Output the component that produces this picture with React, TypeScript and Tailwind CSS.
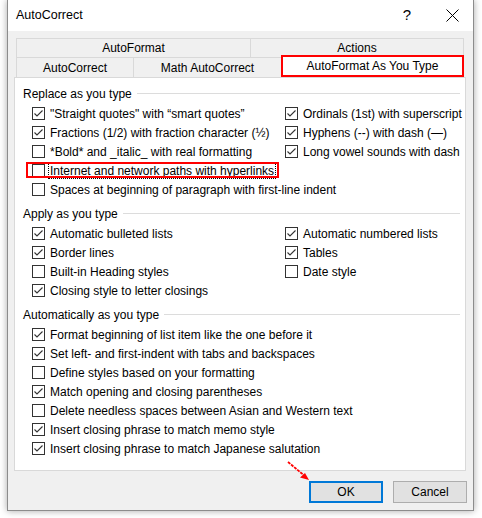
import React from "react";

type Item = { label: string; checked: boolean; focus?: boolean };

const replaceLeft: Item[] = [
  { label: "\"Straight quotes\" with \u201Csmart quotes\u201D", checked: true },
  { label: "Fractions (1/2) with fraction character (\u00BD)", checked: true },
  { label: "*Bold* and _italic_ with real formatting", checked: false },
  { label: "Internet and network paths with hyperlinks", checked: false, focus: true },
  { label: "Spaces at beginning of paragraph with first-line indent", checked: false },
];
const replaceRight: Item[] = [
  { label: "Ordinals (1st) with superscript", checked: true },
  { label: "Hyphens (--) with dash (\u2014)", checked: true },
  { label: "Long vowel sounds with dash", checked: true },
];
const applyLeft: Item[] = [
  { label: "Automatic bulleted lists", checked: true },
  { label: "Border lines", checked: true },
  { label: "Built-in Heading styles", checked: false },
  { label: "Closing style to letter closings", checked: true },
];
const applyRight: Item[] = [
  { label: "Automatic numbered lists", checked: true },
  { label: "Tables", checked: true },
  { label: "Date style", checked: false },
];
const autoItems: Item[] = [
  { label: "Format beginning of list item like the one before it", checked: true },
  { label: "Set left- and first-indent with tabs and backspaces", checked: true },
  { label: "Define styles based on your formatting", checked: false },
  { label: "Match opening and closing parentheses", checked: true },
  { label: "Delete needless spaces between Asian and Western text", checked: false },
  { label: "Insert closing phrase to match memo style", checked: true },
  { label: "Insert closing phrase to match Japanese salutation", checked: true },
];

function Box({ checked }: { checked: boolean }) {
  return (
    <span className="w-[13px] h-[13px] border border-[#333333] bg-white shrink-0 flex items-center justify-center">
      {checked && (
        <svg width="11" height="11" viewBox="0 0 11 11">
          <path d="M1.5 5.5 L4 8 L9.5 2.5" fill="none" stroke="#333333" strokeWidth="1.1" />
        </svg>
      )}
    </span>
  );
}

function Row({ item }: { item: Item }) {
  return (
    <div className="h-[19px] flex items-center gap-[4px] relative">
      <Box checked={item.checked} />
      <span
        className={
          item.focus
            ? "whitespace-nowrap leading-[14px] px-px outline-1 outline-dotted outline-black"
            : "whitespace-nowrap px-px"
        }
      >
        {item.label}
      </span>
      {item.focus && (
        <div className="absolute left-[-6px] top-[1px] w-[253px] h-[16px] border-2 border-[#ff0000]" />
      )}
    </div>
  );
}

function Header({ title }: { title: string }) {
  return (
    <div className="h-[21px] flex items-center gap-[5px] pl-[8px] pr-[5px]">
      <span className="whitespace-nowrap">{title}</span>
      <div className="flex-1 h-px bg-[#dcdcdc]" />
    </div>
  );
}

export default function App() {
  return (
    <div
      className="w-[482px] h-[518px] bg-white pl-[7px] pr-[8px] pb-[7px] text-[12px] text-black relative overflow-hidden"
      style={{ fontFamily: "'Liberation Sans', Arial, sans-serif" }}
    >
      <div className="h-full flex flex-col border-l border-r border-b border-[#8c8c8c] shadow-[0_0_7px_rgba(0,0,0,0.35)] bg-[#f0f0f0]">
        {/* title bar */}
        <div className="h-[31px] bg-white flex items-center pl-[8px] shrink-0">
          <span className="text-[12.5px]">AutoCorrect</span>
          <span className="ml-auto mr-[35px] text-[15px]">?</span>
          <svg width="13" height="13" viewBox="0 0 13 13" className="mr-[14px]">
            <path d="M0.5 0.5 L12.5 12.5 M12.5 0.5 L0.5 12.5" stroke="#000" strokeWidth="1" />
          </svg>
        </div>

        <div className="flex-1 pl-[6px] pt-[7px] flex flex-col">
          {/* tabs */}
          <div className="ml-[2px] w-[448px]">
            <div className="flex h-[19px]">
              <div className="w-[235px] border-t border-l border-r border-[#d9d9d9] flex items-center justify-center">AutoFormat</div>
              <div className="w-[213px] border-t border-r border-[#d9d9d9] flex items-center justify-center">Actions</div>
            </div>
            <div className="flex h-[20px] border-l border-[#d9d9d9]">
              <div className="w-[117px] border-t border-r border-[#d9d9d9] flex items-center justify-center">AutoCorrect</div>
              <div className="w-[148px] border-t border-r border-[#d9d9d9] flex items-center justify-center">Math AutoCorrect</div>
              <div className="w-[183px] -ml-px -mt-[2px] h-[22px] bg-white border-2 border-[#ff0000] relative z-10 flex items-center justify-center">
                AutoFormat As You Type
              </div>
            </div>
          </div>

          {/* panel */}
          <div className="w-[452px] h-[394px] border border-[#d9d9d9] bg-white pt-[5px]">
            <Header title="Replace as you type" />
            <div className="flex pl-[17px]">
              <div className="w-[253px]">
                {replaceLeft.map((it) => (
                  <Row key={it.label} item={it} />
                ))}
              </div>
              <div>
                {replaceRight.map((it) => (
                  <Row key={it.label} item={it} />
                ))}
              </div>
            </div>

            <div className="mt-[4px]">
              <Header title="Apply as you type" />
            </div>
            <div className="flex pl-[17px]">
              <div className="w-[253px]">
                {applyLeft.map((it) => (
                  <Row key={it.label} item={it} />
                ))}
              </div>
              <div>
                {applyRight.map((it) => (
                  <Row key={it.label} item={it} />
                ))}
              </div>
            </div>

            <div className="mt-[4px]">
              <Header title="Automatically as you type" />
            </div>
            <div className="pl-[17px]">
              {autoItems.map((it) => (
                <Row key={it.label} item={it} />
              ))}
            </div>
          </div>

          {/* buttons */}
          <div className="mt-[10px] flex justify-end gap-[10px] pr-[6px]">
            <button className="w-[74px] h-[22px] bg-[#e1e1e1] border-2 border-[#0078d7] flex items-center justify-center">OK</button>
            <button className="w-[74px] h-[22px] bg-[#e1e1e1] border border-[#adadad] flex items-center justify-center">Cancel</button>
          </div>
        </div>
      </div>

      {/* annotation arrow */}
      <svg className="absolute left-[284px] top-[458px]" width="30" height="26" viewBox="0 0 30 26">
        <path d="M4 4 L22 19" stroke="#ff0000" strokeWidth="1.8" strokeDasharray="3 1" />
        <path d="M25 22 L16 19.5 L21 15 Z" fill="#ff0000" />
      </svg>
    </div>
  );
}
